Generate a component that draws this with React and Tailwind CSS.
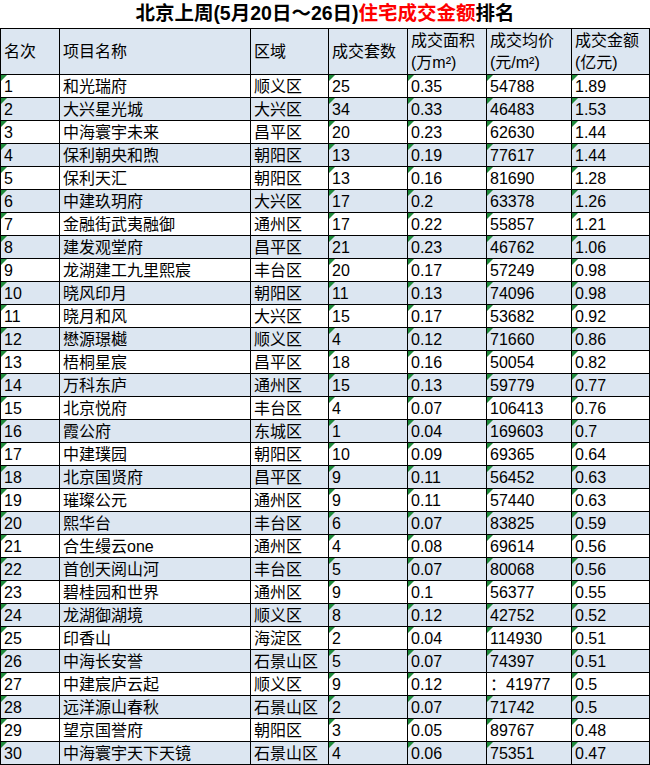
import React from 'react';

const rows = [
  ['1', '和光瑞府', '顺义区', '25', '0.35', '54788', '1.89'],
  ['2', '大兴星光城', '大兴区', '34', '0.33', '46483', '1.53'],
  ['3', '中海寰宇未来', '昌平区', '20', '0.23', '62630', '1.44'],
  ['4', '保利朝央和煦', '朝阳区', '13', '0.19', '77617', '1.44'],
  ['5', '保利天汇', '朝阳区', '13', '0.16', '81690', '1.28'],
  ['6', '中建玖玥府', '大兴区', '17', '0.2', '63378', '1.26'],
  ['7', '金融街武夷融御', '通州区', '17', '0.22', '55857', '1.21'],
  ['8', '建发观堂府', '昌平区', '21', '0.23', '46762', '1.06'],
  ['9', '龙湖建工九里熙宸', '丰台区', '20', '0.17', '57249', '0.98'],
  ['10', '晓风印月', '朝阳区', '11', '0.13', '74096', '0.98'],
  ['11', '晓月和风', '大兴区', '15', '0.17', '53682', '0.92'],
  ['12', '懋源璟樾', '顺义区', '4', '0.12', '71660', '0.86'],
  ['13', '梧桐星宸', '昌平区', '18', '0.16', '50054', '0.82'],
  ['14', '万科东庐', '通州区', '15', '0.13', '59779', '0.77'],
  ['15', '北京悦府', '丰台区', '4', '0.07', '106413', '0.76'],
  ['16', '霞公府', '东城区', '1', '0.04', '169603', '0.7'],
  ['17', '中建璞园', '朝阳区', '10', '0.09', '69365', '0.64'],
  ['18', '北京国贤府', '昌平区', '9', '0.11', '56452', '0.63'],
  ['19', '璀璨公元', '通州区', '9', '0.11', '57440', '0.63'],
  ['20', '熙华台', '丰台区', '6', '0.07', '83825', '0.59'],
  ['21', '合生缦云one', '通州区', '4', '0.08', '69614', '0.56'],
  ['22', '首创天阅山河', '丰台区', '5', '0.07', '80068', '0.56'],
  ['23', '碧桂园和世界', '通州区', '9', '0.1', '56377', '0.55'],
  ['24', '龙湖御湖境', '顺义区', '8', '0.12', '42752', '0.52'],
  ['25', '印香山', '海淀区', '2', '0.04', '114930', '0.51'],
  ['26', '中海长安誉', '石景山区', '5', '0.07', '74397', '0.51'],
  ['27', '中建宸庐云起', '顺义区', '9', '0.12', '：41977', '0.5'],
  ['28', '远洋源山春秋', '石景山区', '2', '0.07', '71742', '0.5'],
  ['29', '望京国誉府', '朝阳区', '3', '0.05', '89767', '0.48'],
  ['30', '中海寰宇天下天镜', '石景山区', '4', '0.06', '75351', '0.47'],
];

const headers = [
  ['名次'],
  ['项目名称'],
  ['区域'],
  ['成交套数'],
  ['成交面积', '(万m²)'],
  ['成交均价', '(元/m²)'],
  ['成交金额', '(亿元)'],
];

// columns that carry Excel's "number stored as text" marker
const numericCols = [0, 3, 4, 5, 6];

function Cell({ children, marker }) {
  return (
    <div className="relative h-[23px] border-r border-b border-black pl-[3px] pt-[2px] flex items-center overflow-hidden whitespace-nowrap">
      {marker && (
        <div className="absolute top-0 left-0 w-0 h-0 border-t-[6px] border-r-[6px] border-t-[#1f8a3b] border-r-transparent"></div>
      )}
      {children}
    </div>
  );
}

export default function App() {
  return (
    <div
      className="w-[650px] h-[765px] bg-white text-black text-[16px] overflow-hidden"
      style={{ fontFamily: "'Liberation Sans', 'Noto Sans CJK SC', sans-serif" }}
    >
      <div className="h-[28px] flex items-center justify-center text-[19.5px] font-bold">
        <span>北京上周(5月20日～26日)</span>
        <span className="text-[#ff0000]">住宅成交金额</span>
        <span>排名</span>
      </div>

      <div className="grid grid-cols-[59px_191px_78px_79px_79px_85px_78px] border-l border-t border-black">
        {headers.map((h, i) => (
          <div
            key={i}
            className="h-[46px] bg-[#dce6f1] border-r border-b border-black pl-[3px] pt-[1px] flex flex-col justify-center leading-[22px] whitespace-nowrap"
          >
            {h.map((line) => (
              <span key={line}>{line}</span>
            ))}
          </div>
        ))}

        {rows.map((r, ri) => (
          <div key={r[0]} className={`contents ${ri % 2 === 1 ? '[&>div]:bg-[#dce6f1]' : '[&>div]:bg-white'}`}>
            {r.map((v, ci) => (
              <Cell key={ci} marker={numericCols.includes(ci) && !v.startsWith('：')}>
                {v}
              </Cell>
            ))}
          </div>
        ))}
      </div>
    </div>
  );
}
